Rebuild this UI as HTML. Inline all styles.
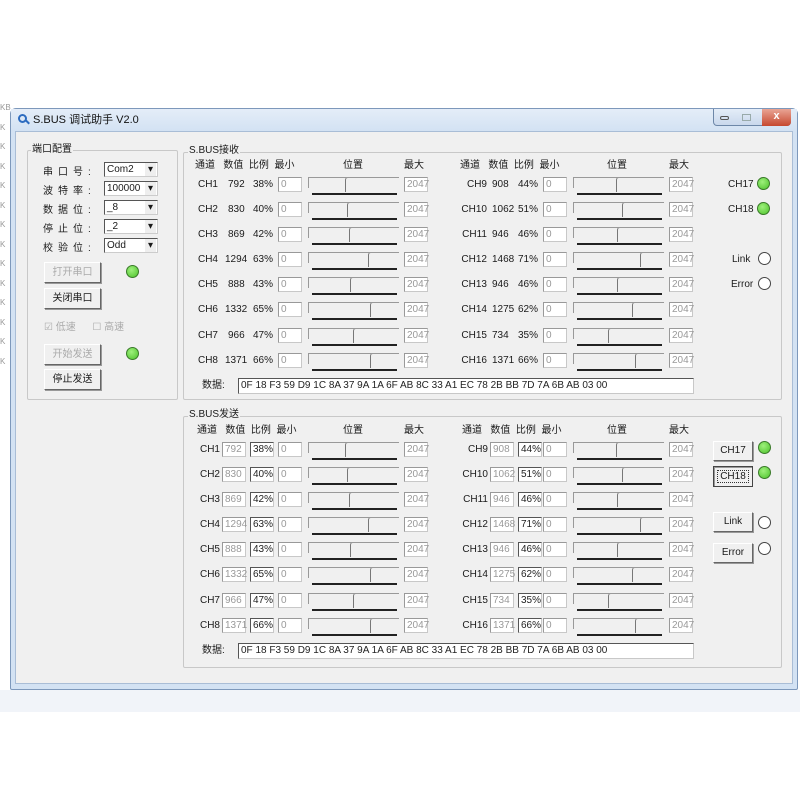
<!DOCTYPE html>
<html><head><meta charset="utf-8">
<style>
*{box-sizing:border-box;margin:0;padding:0}
body{width:800px;height:800px;background:#fff;position:relative;overflow:hidden;font-family:"Liberation Sans","Noto Sans CJK SC",sans-serif;font-size:10px;color:#1a1a1a}
.a{position:absolute}
#win{left:10px;top:108px;width:788px;height:582px;background:#d3e2f3;border:1px solid #7d98bb;border-radius:6px 6px 2px 2px}
#title{left:0;top:0;width:786px;height:22px;background:linear-gradient(#e4edf8,#d3e2f3)}
#client{left:4px;top:22px;width:778px;height:553px;background:#f0f0f0;border:1px solid #a9bdd6}
.grp{border:1px solid #c8c8c8;border-radius:2px}
.gl{background:#f0f0f0;padding:0 1px;font-size:10px;line-height:10px}
.t{position:absolute;white-space:nowrap;line-height:12px}
.box{position:absolute;height:15px;background:#fff;border:1px solid #c8c8c8;border-top-color:#999;border-left-color:#999;color:#999;font-size:10px;line-height:13px;padding-left:2px}
.box.k{color:#222;border-top-color:#555;border-left-color:#555}
.s{position:absolute;width:91px;height:18px}
.s:before{content:"";position:absolute;left:0;top:0;width:90px;height:10px;border-top:1px solid #999;border-left:1px solid #999}
.s i{position:absolute;top:0;left:calc(var(--p) * 0.9px + 3px);height:15px;border-left:1px solid #777;border-top:1px solid #999;border-radius:3px 0 0 0;width:20px;background:#f0f0f0}
.s:after{content:"";position:absolute;left:4px;top:16px;width:85px;height:2px;background:#222}
.row{position:absolute;left:0;width:600px;height:16px}
.led{position:absolute;width:13px;height:13px;border-radius:50%;border:1px solid #3a7a2a;background:radial-gradient(circle at 40% 35%,#9ef07c,#4cc22a)}
.led.o{border:1px solid #444;background:#fff}
.btn{position:absolute;background:#f0f0f0;border:1px solid;border-color:#fff #666 #666 #fff;box-shadow:1px 1px 0 #999;text-align:center;font-size:10px}
.btn.d{color:#aaa}
.sel{position:absolute;left:104px;width:54px;height:15px;background:#fff;border:1px solid #555;border-right-color:#ccc;border-bottom-color:#ccc;font-size:10px;line-height:13px;padding-left:2px}
.sel:after{content:"▾";position:absolute;right:1px;top:0;width:11px;height:13px;background:#eee;font-size:10px;line-height:13px;text-align:center}
.lab{position:absolute;left:43px;font-size:10px;letter-spacing:5px}
</style></head><body>

<div class="a" style="left:0;top:690px;width:800px;height:22px;background:#f1f4f9"></div>
<div class="a" style="left:0;top:98px;width:10px;height:580px;color:#999;font-size:8px;line-height:19.5px">KB<br>K<br>K<br>K<br>K<br>K<br>K<br>K<br>K<br>K<br>K<br>K<br>K<br>K</div>

<div id="win" class="a">
 <div id="title" class="a">
  <div class="a" style="left:7px;top:5px;width:9px;height:9px;border:2px solid #2d6cc0;border-radius:50%"></div>
  <div class="a" style="left:14px;top:12px;width:5px;height:2px;background:#2d6cc0;transform:rotate(45deg)"></div>
  <div class="t" style="left:22px;top:5px;font-size:11px;color:#111">S.BUS 调试助手 V2.0</div>
  <div class="a" style="left:702px;top:0;width:78px;height:17px;border:1px solid #6d87a8;border-top:none;border-radius:0 0 4px 4px;background:linear-gradient(#e4edf8,#c9d8ec)"></div>
  <div class="a" style="left:751px;top:0;width:29px;height:17px;background:linear-gradient(#e9a595,#c6482f);border-radius:0 0 4px 0;color:#fff;text-align:center;font-size:11px;font-weight:bold;line-height:15px">x</div>
  <div class="a" style="left:709px;top:7px;width:9px;height:4px;border:1px solid #555;border-radius:2px"></div>
  <div class="a" style="left:731px;top:5px;width:9px;height:7px;border:1px solid #9aa"></div>
 </div>
 <div id="client" class="a"></div>
</div>

<div class="a grp" style="left:27px;top:150px;width:151px;height:250px"></div>
<div class="a gl" style="left:31px;top:145px">端口配置</div>
<div class="lab" style="top:163px">串口号:</div><div class="sel" style="top:162px">Com2</div>
<div class="lab" style="top:182px">波特率:</div><div class="sel" style="top:181px">100000</div>
<div class="lab" style="top:201px">数据位:</div><div class="sel" style="top:200px">_8</div>
<div class="lab" style="top:220px">停止位:</div><div class="sel" style="top:219px">_2</div>
<div class="lab" style="top:239px">校验位:</div><div class="sel" style="top:238px">Odd</div>
<div class="btn d" style="left:44px;top:262px;width:57px;height:21px;line-height:19px">打开串口</div>
<div class="led" style="left:126px;top:265px"></div>
<div class="btn" style="left:44px;top:288px;width:57px;height:21px;line-height:19px">关闭串口</div>
<div class="t" style="left:44px;top:322px;color:#aaa">☑ 低速&nbsp;&nbsp;&nbsp;&nbsp;&nbsp;&nbsp;☐ 高速</div>
<div class="btn d" style="left:44px;top:344px;width:57px;height:21px;line-height:19px">开始发送</div>
<div class="led" style="left:126px;top:347px"></div>
<div class="btn" style="left:44px;top:369px;width:57px;height:21px;line-height:19px">停止发送</div>

<div class="a grp" style="left:183px;top:152px;width:599px;height:248px"></div>
<div class="a gl" style="left:188px;top:146px">S.BUS接收</div>
<div class="a" style="left:183px;top:0">
 <div class="t" style="left:12px;top:160px">通道&nbsp;&nbsp;&nbsp;数值&nbsp;&nbsp;比例&nbsp;&nbsp;最小</div>
 <div class="t" style="left:160px;top:160px">位置</div>
 <div class="t" style="left:221px;top:160px">最大</div>
 <div class="t" style="left:277px;top:160px">通道&nbsp;&nbsp;&nbsp;数值&nbsp;&nbsp;比例&nbsp;&nbsp;最小</div>
 <div class="t" style="left:424px;top:160px">位置</div>
 <div class="t" style="left:486px;top:160px">最大</div>
</div>

<div class="a" style="left:183px;top:0">
<div class="row" style="top:177px"><div class="t" style="left:0;width:35px;text-align:right;top:2px">CH1</div><div class="t" style="left:45px;top:2px">792</div><div class="t" style="left:70px;top:2px">38%</div><div class="box" style="left:95px;width:24px">0</div><div class="s" style="left:125px;--p:38"><i></i></div><div class="box" style="left:221px;width:24px">2047</div></div>
<div class="row" style="top:202px"><div class="t" style="left:0;width:35px;text-align:right;top:2px">CH2</div><div class="t" style="left:45px;top:2px">830</div><div class="t" style="left:70px;top:2px">40%</div><div class="box" style="left:95px;width:24px">0</div><div class="s" style="left:125px;--p:40"><i></i></div><div class="box" style="left:221px;width:24px">2047</div></div>
<div class="row" style="top:227px"><div class="t" style="left:0;width:35px;text-align:right;top:2px">CH3</div><div class="t" style="left:45px;top:2px">869</div><div class="t" style="left:70px;top:2px">42%</div><div class="box" style="left:95px;width:24px">0</div><div class="s" style="left:125px;--p:42"><i></i></div><div class="box" style="left:221px;width:24px">2047</div></div>
<div class="row" style="top:252px"><div class="t" style="left:0;width:35px;text-align:right;top:2px">CH4</div><div class="t" style="left:42px;top:2px">1294</div><div class="t" style="left:70px;top:2px">63%</div><div class="box" style="left:95px;width:24px">0</div><div class="s" style="left:125px;--p:63"><i></i></div><div class="box" style="left:221px;width:24px">2047</div></div>
<div class="row" style="top:277px"><div class="t" style="left:0;width:35px;text-align:right;top:2px">CH5</div><div class="t" style="left:45px;top:2px">888</div><div class="t" style="left:70px;top:2px">43%</div><div class="box" style="left:95px;width:24px">0</div><div class="s" style="left:125px;--p:43"><i></i></div><div class="box" style="left:221px;width:24px">2047</div></div>
<div class="row" style="top:302px"><div class="t" style="left:0;width:35px;text-align:right;top:2px">CH6</div><div class="t" style="left:42px;top:2px">1332</div><div class="t" style="left:70px;top:2px">65%</div><div class="box" style="left:95px;width:24px">0</div><div class="s" style="left:125px;--p:65"><i></i></div><div class="box" style="left:221px;width:24px">2047</div></div>
<div class="row" style="top:328px"><div class="t" style="left:0;width:35px;text-align:right;top:2px">CH7</div><div class="t" style="left:45px;top:2px">966</div><div class="t" style="left:70px;top:2px">47%</div><div class="box" style="left:95px;width:24px">0</div><div class="s" style="left:125px;--p:47"><i></i></div><div class="box" style="left:221px;width:24px">2047</div></div>
<div class="row" style="top:353px"><div class="t" style="left:0;width:35px;text-align:right;top:2px">CH8</div><div class="t" style="left:42px;top:2px">1371</div><div class="t" style="left:70px;top:2px">66%</div><div class="box" style="left:95px;width:24px">0</div><div class="s" style="left:125px;--p:66"><i></i></div><div class="box" style="left:221px;width:24px">2047</div></div>
</div>
<div class="a" style="left:448px;top:0">
<div class="row" style="top:177px"><div class="t" style="left:0;width:39px;text-align:right;top:2px">CH9</div><div class="t" style="left:44px;top:2px">908</div><div class="t" style="left:70px;top:2px">44%</div><div class="box" style="left:95px;width:24px">0</div><div class="s" style="left:125px;--p:44"><i></i></div><div class="box" style="left:221px;width:24px">2047</div></div>
<div class="row" style="top:202px"><div class="t" style="left:0;width:39px;text-align:right;top:2px">CH10</div><div class="t" style="left:44px;top:2px">1062</div><div class="t" style="left:70px;top:2px">51%</div><div class="box" style="left:95px;width:24px">0</div><div class="s" style="left:125px;--p:51"><i></i></div><div class="box" style="left:221px;width:24px">2047</div></div>
<div class="row" style="top:227px"><div class="t" style="left:0;width:39px;text-align:right;top:2px">CH11</div><div class="t" style="left:44px;top:2px">946</div><div class="t" style="left:70px;top:2px">46%</div><div class="box" style="left:95px;width:24px">0</div><div class="s" style="left:125px;--p:46"><i></i></div><div class="box" style="left:221px;width:24px">2047</div></div>
<div class="row" style="top:252px"><div class="t" style="left:0;width:39px;text-align:right;top:2px">CH12</div><div class="t" style="left:44px;top:2px">1468</div><div class="t" style="left:70px;top:2px">71%</div><div class="box" style="left:95px;width:24px">0</div><div class="s" style="left:125px;--p:71"><i></i></div><div class="box" style="left:221px;width:24px">2047</div></div>
<div class="row" style="top:277px"><div class="t" style="left:0;width:39px;text-align:right;top:2px">CH13</div><div class="t" style="left:44px;top:2px">946</div><div class="t" style="left:70px;top:2px">46%</div><div class="box" style="left:95px;width:24px">0</div><div class="s" style="left:125px;--p:46"><i></i></div><div class="box" style="left:221px;width:24px">2047</div></div>
<div class="row" style="top:302px"><div class="t" style="left:0;width:39px;text-align:right;top:2px">CH14</div><div class="t" style="left:44px;top:2px">1275</div><div class="t" style="left:70px;top:2px">62%</div><div class="box" style="left:95px;width:24px">0</div><div class="s" style="left:125px;--p:62"><i></i></div><div class="box" style="left:221px;width:24px">2047</div></div>
<div class="row" style="top:328px"><div class="t" style="left:0;width:39px;text-align:right;top:2px">CH15</div><div class="t" style="left:44px;top:2px">734</div><div class="t" style="left:70px;top:2px">35%</div><div class="box" style="left:95px;width:24px">0</div><div class="s" style="left:125px;--p:35"><i></i></div><div class="box" style="left:221px;width:24px">2047</div></div>
<div class="row" style="top:353px"><div class="t" style="left:0;width:39px;text-align:right;top:2px">CH16</div><div class="t" style="left:44px;top:2px">1371</div><div class="t" style="left:70px;top:2px">66%</div><div class="box" style="left:95px;width:24px">0</div><div class="s" style="left:125px;--p:66"><i></i></div><div class="box" style="left:221px;width:24px">2047</div></div>
</div>
<div class="t" style="left:202px;top:380px">数据:</div>
<div class="box k" style="left:238px;top:378px;width:456px;height:16px">0F 18 F3 59 D9 1C 8A 37 9A 1A 6F AB 8C 33 A1 EC 78 2B BB 7D 7A 6B AB 03 00</div>
<div class="t" style="left:728px;top:179px">CH17</div><div class="led" style="left:757px;top:177px"></div>
<div class="t" style="left:728px;top:204px">CH18</div><div class="led" style="left:757px;top:202px"></div>
<div class="t" style="left:732px;top:254px">Link</div><div class="led o" style="left:758px;top:252px"></div>
<div class="t" style="left:731px;top:279px">Error</div><div class="led o" style="left:758px;top:277px"></div>

<div class="a grp" style="left:183px;top:416px;width:599px;height:252px"></div>
<div class="a gl" style="left:188px;top:410px">S.BUS发送</div>
<div class="a" style="left:183px;top:0">
 <div class="t" style="left:14px;top:425px">通道&nbsp;&nbsp;&nbsp;数值&nbsp;&nbsp;比例&nbsp;&nbsp;最小</div>
 <div class="t" style="left:160px;top:425px">位置</div>
 <div class="t" style="left:221px;top:425px">最大</div>
 <div class="t" style="left:279px;top:425px">通道&nbsp;&nbsp;&nbsp;数值&nbsp;&nbsp;比例&nbsp;&nbsp;最小</div>
 <div class="t" style="left:424px;top:425px">位置</div>
 <div class="t" style="left:486px;top:425px">最大</div>
</div>
<div class="a" style="left:183px;top:0">
<div class="row" style="top:442px"><div class="t" style="left:0;width:37px;text-align:right;top:2px">CH1</div><div class="box" style="left:39px;width:24px">792</div><div class="box k" style="left:67px;width:24px">38%</div><div class="box" style="left:95px;width:24px">0</div><div class="s" style="left:125px;--p:38"><i></i></div><div class="box" style="left:221px;width:24px">2047</div></div>
<div class="row" style="top:467px"><div class="t" style="left:0;width:37px;text-align:right;top:2px">CH2</div><div class="box" style="left:39px;width:24px">830</div><div class="box k" style="left:67px;width:24px">40%</div><div class="box" style="left:95px;width:24px">0</div><div class="s" style="left:125px;--p:40"><i></i></div><div class="box" style="left:221px;width:24px">2047</div></div>
<div class="row" style="top:492px"><div class="t" style="left:0;width:37px;text-align:right;top:2px">CH3</div><div class="box" style="left:39px;width:24px">869</div><div class="box k" style="left:67px;width:24px">42%</div><div class="box" style="left:95px;width:24px">0</div><div class="s" style="left:125px;--p:42"><i></i></div><div class="box" style="left:221px;width:24px">2047</div></div>
<div class="row" style="top:517px"><div class="t" style="left:0;width:37px;text-align:right;top:2px">CH4</div><div class="box" style="left:39px;width:24px">1294</div><div class="box k" style="left:67px;width:24px">63%</div><div class="box" style="left:95px;width:24px">0</div><div class="s" style="left:125px;--p:63"><i></i></div><div class="box" style="left:221px;width:24px">2047</div></div>
<div class="row" style="top:542px"><div class="t" style="left:0;width:37px;text-align:right;top:2px">CH5</div><div class="box" style="left:39px;width:24px">888</div><div class="box k" style="left:67px;width:24px">43%</div><div class="box" style="left:95px;width:24px">0</div><div class="s" style="left:125px;--p:43"><i></i></div><div class="box" style="left:221px;width:24px">2047</div></div>
<div class="row" style="top:567px"><div class="t" style="left:0;width:37px;text-align:right;top:2px">CH6</div><div class="box" style="left:39px;width:24px">1332</div><div class="box k" style="left:67px;width:24px">65%</div><div class="box" style="left:95px;width:24px">0</div><div class="s" style="left:125px;--p:65"><i></i></div><div class="box" style="left:221px;width:24px">2047</div></div>
<div class="row" style="top:593px"><div class="t" style="left:0;width:37px;text-align:right;top:2px">CH7</div><div class="box" style="left:39px;width:24px">966</div><div class="box k" style="left:67px;width:24px">47%</div><div class="box" style="left:95px;width:24px">0</div><div class="s" style="left:125px;--p:47"><i></i></div><div class="box" style="left:221px;width:24px">2047</div></div>
<div class="row" style="top:618px"><div class="t" style="left:0;width:37px;text-align:right;top:2px">CH8</div><div class="box" style="left:39px;width:24px">1371</div><div class="box k" style="left:67px;width:24px">66%</div><div class="box" style="left:95px;width:24px">0</div><div class="s" style="left:125px;--p:66"><i></i></div><div class="box" style="left:221px;width:24px">2047</div></div>
</div>
<div class="a" style="left:448px;top:0">
<div class="row" style="top:442px"><div class="t" style="left:0;width:40px;text-align:right;top:2px">CH9</div><div class="box" style="left:42px;width:24px">908</div><div class="box k" style="left:70px;width:24px">44%</div><div class="box" style="left:95px;width:24px">0</div><div class="s" style="left:125px;--p:44"><i></i></div><div class="box" style="left:221px;width:24px">2047</div></div>
<div class="row" style="top:467px"><div class="t" style="left:0;width:40px;text-align:right;top:2px">CH10</div><div class="box" style="left:42px;width:24px">1062</div><div class="box k" style="left:70px;width:24px">51%</div><div class="box" style="left:95px;width:24px">0</div><div class="s" style="left:125px;--p:51"><i></i></div><div class="box" style="left:221px;width:24px">2047</div></div>
<div class="row" style="top:492px"><div class="t" style="left:0;width:40px;text-align:right;top:2px">CH11</div><div class="box" style="left:42px;width:24px">946</div><div class="box k" style="left:70px;width:24px">46%</div><div class="box" style="left:95px;width:24px">0</div><div class="s" style="left:125px;--p:46"><i></i></div><div class="box" style="left:221px;width:24px">2047</div></div>
<div class="row" style="top:517px"><div class="t" style="left:0;width:40px;text-align:right;top:2px">CH12</div><div class="box" style="left:42px;width:24px">1468</div><div class="box k" style="left:70px;width:24px">71%</div><div class="box" style="left:95px;width:24px">0</div><div class="s" style="left:125px;--p:71"><i></i></div><div class="box" style="left:221px;width:24px">2047</div></div>
<div class="row" style="top:542px"><div class="t" style="left:0;width:40px;text-align:right;top:2px">CH13</div><div class="box" style="left:42px;width:24px">946</div><div class="box k" style="left:70px;width:24px">46%</div><div class="box" style="left:95px;width:24px">0</div><div class="s" style="left:125px;--p:46"><i></i></div><div class="box" style="left:221px;width:24px">2047</div></div>
<div class="row" style="top:567px"><div class="t" style="left:0;width:40px;text-align:right;top:2px">CH14</div><div class="box" style="left:42px;width:24px">1275</div><div class="box k" style="left:70px;width:24px">62%</div><div class="box" style="left:95px;width:24px">0</div><div class="s" style="left:125px;--p:62"><i></i></div><div class="box" style="left:221px;width:24px">2047</div></div>
<div class="row" style="top:593px"><div class="t" style="left:0;width:40px;text-align:right;top:2px">CH15</div><div class="box" style="left:42px;width:24px">734</div><div class="box k" style="left:70px;width:24px">35%</div><div class="box" style="left:95px;width:24px">0</div><div class="s" style="left:125px;--p:35"><i></i></div><div class="box" style="left:221px;width:24px">2047</div></div>
<div class="row" style="top:618px"><div class="t" style="left:0;width:40px;text-align:right;top:2px">CH16</div><div class="box" style="left:42px;width:24px">1371</div><div class="box k" style="left:70px;width:24px">66%</div><div class="box" style="left:95px;width:24px">0</div><div class="s" style="left:125px;--p:66"><i></i></div><div class="box" style="left:221px;width:24px">2047</div></div>
</div>
<div class="t" style="left:202px;top:645px">数据:</div>
<div class="box k" style="left:238px;top:643px;width:456px;height:16px">0F 18 F3 59 D9 1C 8A 37 9A 1A 6F AB 8C 33 A1 EC 78 2B BB 7D 7A 6B AB 03 00</div>
<div class="btn" style="left:713px;top:441px;width:40px;height:20px;line-height:18px">CH17</div><div class="led" style="left:758px;top:441px"></div>
<div class="btn" style="left:713px;top:466px;width:40px;height:21px;line-height:19px;border-color:#444;box-shadow:inset 1px 1px 0 #999"><span style="border:1px dotted #333;padding:0 2px">CH18</span></div><div class="led" style="left:758px;top:466px"></div>
<div class="btn" style="left:713px;top:512px;width:40px;height:20px;line-height:18px">Link</div><div class="led o" style="left:758px;top:516px"></div>
<div class="btn" style="left:713px;top:543px;width:40px;height:20px;line-height:18px">Error</div><div class="led o" style="left:758px;top:542px"></div>

</body></html>
